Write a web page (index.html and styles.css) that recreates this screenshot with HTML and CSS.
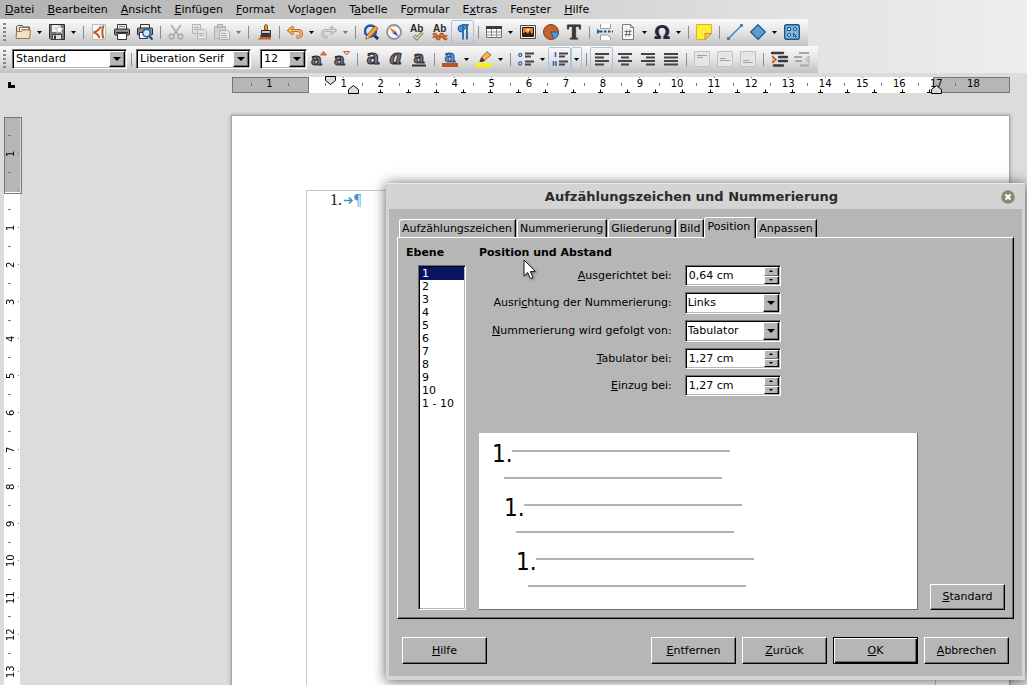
FILE: index.html
```html
<!DOCTYPE html>
<html lang="de">
<head>
    <meta charset="UTF-8">
    <meta name="viewport" content="width=device-width, initial-scale=1.0">
    <title>Aufzählungszeichen und Nummerierung</title>
    <link rel="stylesheet" href="styles.css">
</head>
<body>
    <header class="app-header">
        <nav class="menubar">
            <a href="#"><u>D</u>atei</a>
            <a href="#"><u>B</u>earbeiten</a>
            <a href="#"><u>A</u>nsicht</a>
            <a href="#"><u>E</u>infügen</a>
            <a href="#"><u>F</u>ormat</a>
            <a href="#">Vo<u>r</u>lagen</a>
            <a href="#">T<u>a</u>belle</a>
            <a href="#">F<u>o</u>rmular</a>
            <a href="#">E<u>x</u>tras</a>
            <a href="#">Fen<u>s</u>ter</a>
            <a href="#"><u>H</u>ilfe</a>
        </nav>

        <!-- Standard-Symbolleiste -->
        <div class="toolbar">
            <span class="grip"></span>
            <button class="tool" aria-label="Öffnen"><svg viewBox="0 0 16 16"><path d="M1.500 14.500V2.500l1-1h5l1 1.500h6v11.500z" fill="#e9dcb8" stroke="#6b5847"/><path d="M4.500 3.500h9v5h-9z" fill="#fff" stroke="#77706a"/><path d="M6 5.500h6" stroke="#999"/><path d="M1 14.500l.5-7h5l1-1.500h8L14.500 14.500z" fill="#efe3c3" stroke="#a3733e"/></svg></button>
            <button class="more" aria-label="Öffnen Menü"><svg viewBox="0 0 5 3"><path d="M0 0h5L2.500 3z"/></svg></button>
            <button class="tool" aria-label="Speichern"><svg viewBox="0 0 16 16"><path d="M.5.500h15v15H2L.5 14z" fill="#77757c" stroke="#2b2830"/><path d="M3 1h9v7H3z" fill="#eee"/><path d="M3.500 10.500h9v5h-9z" fill="#ddd" stroke="#444"/><path d="M5 11.500h2V15H5z" fill="#333"/><path d="M10.500 1l1.200 3 3.300.3-2.500 2 .8 3.200-2.800-1.700-2.800 1.700.8-3.200-2.500-2 3.300-.3z" fill="#fff" stroke="#999" stroke-width=".6"/></svg></button>
            <button class="more" aria-label="Speichern Menü"><svg viewBox="0 0 5 3"><path d="M0 0h5L2.500 3z"/></svg></button>
            <span class="sep"></span>
            <button class="tool" aria-label="Als PDF exportieren"><svg viewBox="0 0 16 16"><path d="M1.500.500h13v15h-13z" fill="#f7f7f7" stroke="#bbb"/><path d="M10 2.500C8 5.500 6 7.500 2.500 8.500c3 .5 5 2.500 6 5.500M12.500 1.500c-1.500 4-1.500 9 0 13" fill="none" stroke="#c25a1c" stroke-width="2"/></svg></button>
            <button class="tool" aria-label="Drucken"><svg viewBox="0 0 16 16"><path d="M3.500.500h9v5h-9z" fill="#eee" stroke="#35323a"/><path d="M5 2.500h6" stroke="#888"/><rect x=".5" y="5" width="15" height="6" rx="1" fill="#8d8b92" stroke="#2b2830"/><path d="M2 8.500h12" stroke="#2b2830"/><path d="M3.500 9.500h9v6h-9z" fill="#fff" stroke="#35323a"/></svg></button>
            <button class="tool" aria-label="Druckvorschau"><svg viewBox="0 0 16 16"><path d="M3.500.500h9v5h-9z" fill="#eee" stroke="#35323a"/><rect x=".5" y="4" width="15" height="7" rx="1" fill="#8d8b92" stroke="#2b2830"/><path d="M2.500 8.500h8v6h-8z" fill="#fff" stroke="#35323a"/><path d="M12 12l3.500 3.500" stroke="#173f74" stroke-width="2"/><circle cx="9.500" cy="9" r="3.700" fill="#cfe6f7" stroke="#215fa5" stroke-width="1.500"/></svg></button>
            <span class="sep"></span>
            <button class="tool" disabled aria-label="Ausschneiden"><svg viewBox="0 0 16 16" fill="none" stroke="#a8a8a8" stroke-width="1.500"><path d="M3 1l7 9.500M13 1L6 10.500"/><circle cx="3.500" cy="12.500" r="2.300"/><circle cx="12.500" cy="12.500" r="2.300"/></svg></button>
            <button class="tool" disabled aria-label="Kopieren"><svg viewBox="0 0 16 16" fill="#e2e2e2" stroke="#b4b4b4"><path d="M1.500.500h8v9h-8z"/><path d="M3 3.500h5M3 5.500h5"/><path d="M6.500 5.500h7l2 2v7.500h-9z"/><path d="M8 9.500h5M8 11.500h5"/></svg></button>
            <button class="tool" disabled aria-label="Einfügen"><svg viewBox="0 0 16 16" fill="#d2d2d2" stroke="#adadad"><path d="M.5 2.500h11v12H.5z"/><path d="M3.500.500h5v3h-5z"/><path d="M5.500 6.500h8l2 2v7h-10z" fill="#e8e8e8"/><path d="M7 9.500h5M7 11.500h6M7 13.500h6"/></svg></button>
            <button class="more off" disabled aria-label="Einfügen Menü"><svg viewBox="0 0 5 3"><path d="M0 0h5L2.500 3z"/></svg></button>
            <span class="sep"></span>
            <button class="tool" aria-label="Format übertragen"><svg viewBox="0 0 16 16"><path d="M8.500 6V1.500q1.500-2 3 0V6z" fill="#f0a23c" stroke="#8d4c12"/><path d="M5.500 6.500h9v3h-9z" fill="#c9c9c9" stroke="#2b2830"/><path d="M5 9.500h10v4H4z" fill="#3c3940"/><path d="M0 15.500c3 0 3-2 5-2.500h10v2.500z" fill="#c4622a"/></svg></button>
            <span class="sep"></span>
            <button class="tool" aria-label="Rückgängig"><svg viewBox="0 0 16 16"><path d="M6.500 2.500L2 6.500l4.500 4M2.500 6.500H11q3.500.5 3.500 3.200T11 13H9" fill="none" stroke="#b3591b" stroke-width="3"/><path d="M6.500 2.500L2 6.500l4.500 4M2.500 6.500H11q3.500.5 3.500 3.200T11 13H9" fill="none" stroke="#f8c05c" stroke-width="1.500"/></svg></button>
            <button class="more" aria-label="Rückgängig Menü"><svg viewBox="0 0 5 3"><path d="M0 0h5L2.500 3z"/></svg></button>
            <button class="tool" disabled aria-label="Wiederherstellen"><svg viewBox="0 0 16 16" fill="none"><path d="M9.500 2.500l4.500 4-4.500 4M13.500 6.500H5Q1.500 7 1.500 9.700T5 13h2" stroke="#b0b0b0" stroke-width="2.800"/><path d="M9.500 2.500l4.500 4-4.500 4M13.500 6.500H5Q1.500 7 1.500 9.700T5 13h2" stroke="#e2e2e2"/></svg></button>
            <button class="more off" disabled aria-label="Wiederherstellen Menü"><svg viewBox="0 0 5 3"><path d="M0 0h5L2.500 3z"/></svg></button>
            <span class="sep"></span>
            <button class="tool" aria-label="Suchen und Ersetzen"><svg viewBox="0 0 16 16"><path d="M11 11l4 4" stroke="#2a2a3a" stroke-width="3"/><circle cx="7.500" cy="7" r="5.500" fill="#dbe9f5" stroke="#1f5ba3" stroke-width="2.500"/><path d="M3 15l1-4 8-9 3 2.500-8.500 9z" fill="#f6a640" stroke="#a54e12"/><path d="M3 15l1-4 2.500 2.500z" fill="#fff" stroke="#6d4a30" stroke-width=".6"/></svg></button>
            <button class="tool" aria-label="Navigator"><svg viewBox="0 0 16 16"><circle cx="8" cy="8" r="7" fill="#f6f6f6" stroke="#929292" stroke-width="1.800"/><path d="M3.500 3.500L9.500 7 7 9.500z" fill="#e87b1f"/><path d="M12.500 12.500L9.500 7 7 9.500z" fill="#225e9e"/></svg></button>
            <button class="tool" aria-label="Rechtschreibung"><svg viewBox="0 0 16 16"><text x="1" y="8" class="t-ab">Ab</text><path d="M5 11.500l2.500 3 6-6" fill="none" stroke="#6e6b45" stroke-width="3"/><path d="M5 11.500l2.500 3 6-6" fill="none" stroke="#eae8bd" stroke-width="1.200"/></svg></button>
            <button class="tool" aria-label="Automatische Rechtschreibprüfung"><svg viewBox="0 0 16 16"><text x="1" y="8" class="t-ab">Ab</text><path d="M1 11q1.750-3 3.500 0t3.500 0 3.500 0 3.500 0M1 14q1.750-3 3.500 0t3.500 0 3.500 0 3.500 0" fill="none" stroke="#c05a1e" stroke-width="2"/></svg></button>
            <button class="tool active" aria-label="Formatierungszeichen"><svg viewBox="0 0 16 16"><path d="M13.500 1H7Q3 1 3 4.500T7 8z" fill="#4b93cf" stroke="#1d5c9e"/><path d="M7 1h6.500M8 1v14.500M12 1v14.500" stroke="#2c71b4" stroke-width="2"/></svg></button>
            <span class="sep"></span>
            <button class="tool" aria-label="Tabelle"><svg viewBox="0 0 16 16"><path d="M.5 2.500h15v11H.5z" fill="#fff" stroke="#6e6e6e"/><path d="M0 2h16v3H0z" fill="#3c3940"/><path d="M.5 8h15M.5 11h15M5.500 5v9M10.500 5v9" stroke="#8b8b8b"/></svg></button>
            <button class="more" aria-label="Tabelle Menü"><svg viewBox="0 0 5 3"><path d="M0 0h5L2.500 3z"/></svg></button>
            <button class="tool" aria-label="Bild"><svg viewBox="0 0 16 16"><path d="M.5 1.500h15v13H.5z" fill="#f2f2f2" stroke="#4c4950"/><path d="M2.500 3.500h11v9h-11z" fill="#e58a2b" stroke="#2d1b12"/><path d="M3 12v-3l3-1 2 2 2-4 1 4 2-1v3z" fill="#3a2014"/><circle cx="8" cy="6" r="1.500" fill="#fbe29a"/></svg></button>
            <button class="tool" aria-label="Diagramm"><svg viewBox="0 0 16 16"><circle cx="8" cy="8" r="7.500" fill="#c3632b" stroke="#8a3c12"/><path d="M8 8l7.500 0A7.500 7.500 0 0 1 11 14.800z" fill="#5b9bd0" stroke="#1f5b9c"/></svg></button>
            <button class="tool" aria-label="Textfeld"><svg viewBox="0 0 16 16"><text x="8" y="15" text-anchor="middle" class="t-serif">T</text></svg></button>
            <span class="sep"></span>
            <button class="tool" aria-label="Seitenumbruch"><svg viewBox="0 0 16 16"><path d="M3.500 0v4.500h10V0M3.500 16v-5h7l3 2.500V16" fill="#fff" stroke="#9a9a9a"/><path d="M0 5l4 2.500L0 10z" fill="#1d5c9e"/><path d="M3 7.500h13" stroke="#1d4d84" stroke-width="2" stroke-dasharray="2.500 1.500"/></svg></button>
            <button class="tool" aria-label="Feldbefehl"><svg viewBox="0 0 16 16"><path d="M2.500.500h8l3 3v12h-11z" fill="#f8f8f8" stroke="#7c7c7c"/><path d="M10.500.500v3h3" fill="none" stroke="#7c7c7c"/><path d="M7 5.500l-1 7M10 5.500l-1 7M4.500 7.500h7M4.500 10.500h7" stroke="#666" stroke-width=".9"/></svg></button>
            <button class="more" aria-label="Feldbefehl Menü"><svg viewBox="0 0 5 3"><path d="M0 0h5L2.500 3z"/></svg></button>
            <button class="tool" aria-label="Sonderzeichen"><svg viewBox="0 0 16 16"><text x="8" y="15" text-anchor="middle" class="t-omega">Ω</text></svg></button>
            <button class="more" aria-label="Sonderzeichen Menü"><svg viewBox="0 0 5 3"><path d="M0 0h5L2.500 3z"/></svg></button>
            <span class="sep"></span>
            <button class="tool" aria-label="Kommentar"><svg viewBox="0 0 16 16"><path d="M.5.500h15v9L9.500 15.500h-9z" fill="#fdf03a" stroke="#e8b400"/><path d="M9 15.500q0-3.500 0-6h6.500z" fill="#f7c777" stroke="#c98b2c"/></svg></button>
            <span class="sep"></span>
            <button class="tool" aria-label="Linie"><svg viewBox="0 0 16 16"><path d="M2 14L14 2" stroke="#3f84bf" stroke-width="1.500"/><path d="M0 13h3v3H0zM13 0h3v3h-3z" fill="#3f84bf"/></svg></button>
            <button class="tool" aria-label="Rautenformen"><svg viewBox="0 0 16 16"><path d="M8 .7L15.300 8 8 15.300.7 8z" fill="#5d9ccf" stroke="#1d5c9e" stroke-width="1.300"/></svg></button>
            <button class="more" aria-label="Formen Menü"><svg viewBox="0 0 5 3"><path d="M0 0h5L2.500 3z"/></svg></button>
            <button class="tool" aria-label="Zeichenfunktionen"><svg viewBox="0 0 16 16"><rect x=".7" y=".7" width="14.600" height="14.600" rx="1.500" fill="#7fb2da" stroke="#1d5591" stroke-width="1.400"/><g fill="#d8ecf8" stroke="#1d4d84"><path d="M3.500 3.500h3v3h-3zM9.500 12.500v-3l3 3z"/><circle cx="11" cy="5" r="1.500"/><circle cx="5" cy="11" r="1.500"/></g></svg></button>
        </div>

        <!-- Formatierung -->
        <div class="toolbar">
            <span class="grip"></span>
            <div class="combo combo-style"><select aria-label="Absatzvorlage"><option>Standard</option></select><span class="drop"></span></div>
            <span class="sep"></span>
            <div class="combo combo-font"><select aria-label="Schriftname"><option>Liberation Serif</option></select><span class="drop"></span></div>
            <div class="combo combo-size"><select aria-label="Schriftgröße"><option>12</option></select><span class="drop"></span></div>
            <button class="tool" aria-label="Schrift vergrößern"><svg viewBox="0 0 16 16"><text x="0" y="14" class="t-a">a</text><path d="M9.500 4l3-3.500 3 3.500z" fill="#e8843c" stroke="#b9521a" stroke-width=".8"/></svg></button>
            <button class="tool" aria-label="Schrift verkleinern"><svg viewBox="0 0 16 16"><text x="0" y="14" class="t-a">a</text><path d="M9.500.5l3 3.500 3-3.500z" fill="#fbd3a4" stroke="#c4622a"/></svg></button>
            <span class="sep"></span>
            <button class="tool" aria-label="Fett"><svg viewBox="0 0 16 16"><text x="8" y="13" text-anchor="middle" class="t-big">a</text></svg></button>
            <button class="tool" aria-label="Kursiv"><svg viewBox="0 0 16 16"><text x="8" y="13" text-anchor="middle" class="t-big t-italic">a</text></svg></button>
            <button class="tool" aria-label="Unterstrichen"><svg viewBox="0 0 16 16"><text x="8" y="12" text-anchor="middle" class="t-a">a</text><path d="M1 14.500h14" stroke="#3b2b3c" stroke-width="2"/></svg></button>
            <span class="sep"></span>
            <button class="tool" aria-label="Schriftfarbe"><svg viewBox="0 0 16 16"><text x="8" y="11" text-anchor="middle" class="t-a t-blue">a</text><path d="M0 12h16v4H0z" fill="#b9561e"/></svg></button>
            <button class="more" aria-label="Schriftfarbe Menü"><svg viewBox="0 0 5 3"><path d="M0 0h5L2.500 3z"/></svg></button>
            <button class="tool" aria-label="Zeichenhintergrund"><svg viewBox="0 0 16 16"><path d="M5 7l6-6.500L15 4l-6.500 5.500z" fill="#f2b552" stroke="#9a5216" stroke-width=".8"/><path d="M4 9l1.500-3L9 9.500 6.500 11H3.500z" fill="#4b3b3a"/><path d="M0 12h16v4H0z" fill="#fcee10"/></svg></button>
            <button class="more" aria-label="Zeichenhintergrund Menü"><svg viewBox="0 0 5 3"><path d="M0 0h5L2.500 3z"/></svg></button>
            <span class="sep"></span>
            <button class="tool" aria-label="Aufzählung"><svg viewBox="0 0 16 16"><g fill="#fff" stroke="#2b6db0" stroke-width="1.300"><circle cx="2.200" cy="4" r="1.500"/><circle cx="2.200" cy="12.500" r="1.500"/></g><path d="M7 2.500h9M7 5.500h6M7 10.500h9M7 13.500h6" stroke="#45424a" stroke-width="2"/></svg></button>
            <button class="more" aria-label="Aufzählung Menü"><svg viewBox="0 0 5 3"><path d="M0 0h5L2.500 3z"/></svg></button>
            <button class="tool active" aria-label="Nummerierung"><svg viewBox="0 0 16 16"><path d="M3.500 1v5M1.500 10v5M4 10v5" stroke="#2b6db0" stroke-width="1.600"/><path d="M7 2.500h9M7 5.500h6M7 10.500h9M7 13.500h6" stroke="#45424a" stroke-width="2"/></svg></button>
            <button class="more active" aria-label="Nummerierung Menü"><svg viewBox="0 0 5 3"><path d="M0 0h5L2.500 3z"/></svg></button>
            <span class="sep"></span>
            <button class="tool active" aria-label="Linksbündig"><svg viewBox="0 0 16 16" class="lines"><path d="M1 3h14M1 6.500h9M1 10h14M1 13.500h9"/></svg></button>
            <button class="tool" aria-label="Zentriert"><svg viewBox="0 0 16 16" class="lines"><path d="M1 3h14M4 6.500h8M1 10h14M4 13.500h8"/></svg></button>
            <button class="tool" aria-label="Rechtsbündig"><svg viewBox="0 0 16 16" class="lines"><path d="M1 3h14M6 6.500h9M1 10h14M6 13.500h9"/></svg></button>
            <button class="tool" aria-label="Blocksatz"><svg viewBox="0 0 16 16" class="lines"><path d="M1 3h14M1 6.500h14M1 10h14M1 13.500h14"/></svg></button>
            <span class="sep"></span>
            <button class="tool" disabled aria-label="Oben ausrichten"><svg viewBox="0 0 16 16" fill="#e6e6e6" stroke="#c2c2c2"><path d="M.5.500h15v15H.5z"/><path d="M3 4.500h10M3 6.500h6" stroke="#a2a2a2"/></svg></button>
            <button class="tool" disabled aria-label="Mittig ausrichten"><svg viewBox="0 0 16 16" fill="#e6e6e6" stroke="#c2c2c2"><path d="M.5.500h15v15H.5z"/><path d="M3 7.500h6M3 9.500h10" stroke="#a2a2a2"/></svg></button>
            <button class="tool" disabled aria-label="Unten ausrichten"><svg viewBox="0 0 16 16" fill="#e6e6e6" stroke="#c2c2c2"><path d="M.5.500h15v15H.5z"/><path d="M3 9.500h6M3 11.500h10" stroke="#a2a2a2"/></svg></button>
            <span class="sep"></span>
            <button class="tool" aria-label="Einzug erhöhen"><svg viewBox="0 0 16 16"><path d="M1 2h11M8 6h8M8 10h8M3 14.500h9" stroke="#3c3940" stroke-width="2.400" stroke-linecap="round"/><path d="M1 5l4 3.500L1 12" fill="#f1b26c" stroke="#c0591b" stroke-width="1.500"/></svg></button>
            <button class="tool" disabled aria-label="Einzug verringern"><svg viewBox="0 0 16 16"><path d="M5 2h10M0 6h8M1 10h7M6 14.500h9" stroke="#a6a6a6" stroke-width="2.200"/><path d="M15 5l-4 3.500L15 12z" fill="#d0d0d0" stroke="#b0b0b0"/></svg></button>
        </div>
    </header>

    <main class="workspace">
        <div class="ruler-row">
            <span class="tab-type"></span>
            <div class="hruler">
                <div class="hruler-cells">
                    <span>1</span><span></span><span>1</span><span>2</span><span>3</span><span>4</span><span>5</span><span>6</span><span>7</span><span>8</span><span>9</span><span>10</span><span>11</span><span>12</span><span>13</span><span>14</span><span>15</span><span>16</span><span>17</span><span>18</span>
                </div>
                <!-- Einzugsmarken und Standardtabulatoren -->
                <svg class="hruler-marks" width="778" height="18">
                    <path d="M93.500-.5h10v4l-5 4-5-4z" fill="#dcdcda" stroke="#000"/>
                    <path d="M116.500 16.500v-4l5-4 5 4v4zM699.500 16.500v-4l5-4 5 4v4z" fill="#dcdcda" stroke="#000"/>
                    <path fill="none" stroke="#000" d="M146 15.500h5m-2.500-3v3M174 15.500h5m-2.500-3v3M202 15.500h5m-2.500-3v3M229 15.500h5m-2.500-3v3M256 15.500h5m-2.500-3v3M284 15.500h5m-2.500-3v3M311 15.500h5m-2.500-3v3M339 15.500h5m-2.500-3v3M366 15.500h5m-2.500-3v3M393 15.500h5m-2.500-3v3M421 15.500h5m-2.500-3v3M448 15.500h5m-2.500-3v3M476 15.500h5m-2.500-3v3M503 15.500h5m-2.500-3v3M531 15.500h5m-2.500-3v3M558 15.500h5m-2.500-3v3M586 15.500h5m-2.500-3v3M613 15.500h5m-2.500-3v3M640 15.500h5m-2.500-3v3M668 15.500h5m-2.500-3v3M695 15.500h5m-2.500-3v3"/>
                </svg>
            </div>
        </div>
        <div class="edit-area">
            <div class="vruler">
                <span>1</span><span></span><span>1</span><span>2</span><span>3</span><span>4</span><span>5</span><span>6</span><span>7</span><span>8</span><span>9</span><span>10</span><span>11</span><span>12</span><span>13</span>
            </div>
            <div class="sheet">
                <div class="text-frame">
                    <p class="doc-line">1.<svg class="tab-mark" width="12" height="9" viewBox="0 0 12 9"><path d="M2 4.500h8M7 1.500l3 3-3 3" fill="none" stroke="#3d8fc4" stroke-width="1.500"/></svg><span class="para-mark">¶</span></p>
                </div>
            </div>
        </div>
    </main>

    <section class="dialog" role="dialog" aria-labelledby="dlg-title">
        <div class="titlebar">
            <h1 id="dlg-title">Aufzählungszeichen und Nummerierung</h1>
            <button class="close" aria-label="Schließen"><svg width="14" height="14" viewBox="0 0 14 14"><circle cx="7" cy="7" r="6.800" fill="#8d8970"/><path d="M4.500 4.500l5 5M9.500 4.500l-5 5" stroke="#fff" stroke-width="2"/></svg></button>
        </div>
        <div class="dialog-body">
            <div class="tabs" role="tablist">
                <button class="tab" role="tab">Aufzählungszeichen</button>
                <button class="tab" role="tab">Nummerierung</button>
                <button class="tab" role="tab">Gliederung</button>
                <button class="tab" role="tab">Bild</button>
                <button class="tab current" role="tab" aria-selected="true">Position</button>
                <button class="tab" role="tab">Anpassen</button>
            </div>
            <div class="panel" role="tabpanel">
                <div class="levels">
                    <label class="heading" for="level">Ebene</label>
                    <select id="level" class="level-list" size="26">
                        <option selected>1</option>
                        <option>2</option>
                        <option>3</option>
                        <option>4</option>
                        <option>5</option>
                        <option>6</option>
                        <option>7</option>
                        <option>8</option>
                        <option>9</option>
                        <option>10</option>
                        <option>1 - 10</option>
                    </select>
                </div>
                <div class="settings">
                    <h2 class="heading">Position und Abstand</h2>
                    <div class="form">
                        <label for="align-at"><u>A</u>usgerichtet bei:</label>
                        <div class="spin"><input type="text" id="align-at" value="0,64 cm"><div class="steps"><button class="up" aria-label="Mehr"></button><button class="down" aria-label="Weniger"></button></div></div>
                        <label for="num-align">Ausri<u>c</u>htung der Nummerierung:</label>
                        <div class="combo"><select id="num-align"><option>Links</option></select><span class="drop"></span></div>
                        <label for="followed"><u>N</u>ummerierung wird gefolgt von:</label>
                        <div class="combo"><select id="followed"><option>Tabulator</option></select><span class="drop"></span></div>
                        <label for="tab-at"><u>T</u>abulator bei:</label>
                        <div class="spin"><input type="text" id="tab-at" value="1,27 cm"><div class="steps"><button class="up" aria-label="Mehr"></button><button class="down" aria-label="Weniger"></button></div></div>
                        <label for="indent-at"><u>E</u>inzug bei:</label>
                        <div class="spin"><input type="text" id="indent-at" value="1,27 cm"><div class="steps"><button class="up" aria-label="Mehr"></button><button class="down" aria-label="Weniger"></button></div></div>
                    </div>
                    <div class="preview-row">
                        <div class="preview">
                            <div class="sample"><div class="first"><span>1.</span><i class="rule"></i></div><i class="rule"></i>
                                <div class="sample"><div class="first"><span>1.</span><i class="rule"></i></div><i class="rule"></i>
                                    <div class="sample"><div class="first"><span>1.</span><i class="rule"></i></div><i class="rule"></i></div>
                                </div>
                            </div>
                        </div>
                        <button class="btn btn-small"><u>S</u>tandard</button>
                    </div>
                </div>
            </div>
            <div class="actions">
                <button class="btn btn-help"><u>H</u>ilfe</button>
                <button class="btn"><u>E</u>ntfernen</button>
                <button class="btn"><u>Z</u>urück</button>
                <button class="btn btn-default"><u>O</u>K</button>
                <button class="btn"><u>A</u>bbrechen</button>
            </div>
        </div>
    </section>

    <svg class="pointer" width="13" height="21" viewBox="0 0 13 21"><path d="M1 1v16l3.700-3.500L7.300 19.500l2.600-1.100L7.400 12.500h5z" fill="#fff" stroke="#222"/></svg>
</body>
</html>
```

FILE: styles.css
```css
:root {
    --face: #b6b6b6;
    --shade: #6e6e6e;
    --desk: #dcdcda;
    --select: #0a1464;
}
* { box-sizing: border-box; }
body { margin: 0; height: 100vh; overflow: hidden; display: flex; flex-direction: column; background: var(--desk); color: #000; font-family: "DejaVu Sans", sans-serif; font-size: 11px; line-height: 14px; }
button, input, select { font: inherit; color: inherit; margin: 0; padding: 0; border: 0; border-radius: 0; background: none; }
svg { display: block; overflow: visible; }

/* Menü */
.app-header { background: linear-gradient(90deg, #b3b3b3, #bcbcbc 20%, #d6d6d6 60%, #e4e4e4 80%, #eee); }
.menubar { display: flex; gap: 13px; height: 19px; padding: 3px 5px 0; }
.menubar a { color: #000; text-decoration: none; }

/* Symbolleisten */
.toolbar { display: flex; align-items: center; width: max-content; height: 27px; padding: 0 5px 1px 0; background: linear-gradient(#fafafa, #e6e6e6 45%, #c2c2c2); }
.grip { width: 3px; height: 18px; margin: 0 5px 0 3px; background: repeating-linear-gradient(#888 0 2px, transparent 2px 4px); }
.tool { width: 23px; height: 24px; border: 1px solid transparent; display: flex; align-items: center; justify-content: center; }
.tool svg { width: 16px; height: 16px; flex: none; }
.more { width: 11px; height: 24px; border: 1px solid transparent; display: flex; align-items: center; justify-content: center; }
.more svg { width: 5px; height: 3px; flex: none; }
.more.off svg { fill: #777; }
.tool.active, .more.active { border-color: #a9c3dc; border-radius: 2px; }
.sep { width: 8px; height: 13px; background: linear-gradient(#8c8c8c, #8c8c8c) center / 1px 100% no-repeat; }
.lines { stroke: #45424a; stroke-width: 2; }
.t-ab { font: bold 10px/10px "Liberation Sans", sans-serif; fill: #2d2630; }
.t-serif { font: bold 20px/20px "Liberation Serif", serif; fill: #38353c; stroke: #38353c; }
.t-omega { font: bold 19px/19px "DejaVu Sans", sans-serif; fill: #2d2634; }
.t-a { font: bold 17px/17px "DejaVu Serif", serif; fill: #77747c; stroke: #2f2b33; stroke-width: 1; }
.t-big { font: bold 20px/20px "DejaVu Serif", serif; fill: #77747c; stroke: #2f2b33; stroke-width: 1; }
.t-italic { font-style: italic; }
.t-blue { fill: #5b9bd0; stroke: #1d5591; }

/* Felder */
.combo, .spin { position: relative; border: 1px solid; border-color: var(--shade) #fff #fff var(--shade); background: #fff; box-shadow: inset 1px 1px #000, inset -1px -1px var(--face); }
.combo { height: 22px; }
.combo select { appearance: none; width: 100%; height: 100%; padding: 0 18px 0 2px; }
.drop { position: absolute; top: 1px; right: 1px; bottom: 1px; width: 16px; pointer-events: none; background: var(--face); border: 1px solid; border-color: #fff #000 #000 #fff; box-shadow: inset -1px -1px var(--shade); display: flex; align-items: center; justify-content: center; }
.drop::before { content: ""; border: 4px solid transparent; border-top-color: #000; border-bottom: 0; }
.toolbar .combo { height: 20px; }
.toolbar .combo select { padding-left: 3px; }
.toolbar .combo-style, .toolbar .combo-font { width: 115px; margin-left: 1px; }
.toolbar .combo-size { width: 47px; margin-left: 9px; }
.spin { display: flex; height: 21px; padding: 1px; }
.spin input { flex: 1; min-width: 0; padding-left: 2px; outline: 0; }
.steps { width: 15px; display: flex; flex-direction: column; }
.steps button { flex: 1; display: flex; align-items: center; justify-content: center; background: var(--face); border: 1px solid; border-color: #fff #000 var(--shade) #fff; box-shadow: inset -1px 0 var(--shade); }
.steps .down { border-bottom-color: #000; }
.steps button::before { content: ""; border: 2px solid transparent; }
.steps .up::before { border-top: 0; border-bottom-color: #000; }
.steps .down::before { border-bottom: 0; border-top-color: #000; }

/* Lineale */
.workspace { flex: 1; min-height: 0; display: flex; flex-direction: column; }
.ruler-row { display: flex; padding: 4px 17px 0 8px; }
.tab-type { width: 7px; height: 6px; margin: 5px 217px 0 0; border: solid #000; border-width: 0 0 3px 3px; }
.hruler { position: relative; flex: 1; height: 16px; font-size: 10px; background: #fff; }
.hruler::before, .hruler::after { content: ""; position: absolute; top: 0; bottom: 0; left: 0; width: 75px; background: var(--face); border: 1px solid #777; }
.hruler::after { left: auto; right: 0; }
.hruler-cells { position: relative; z-index: 1; display: flex; width: 760px; padding-left: 19px; }
.hruler-cells span { flex: 1; height: 16px; text-align: center; background: linear-gradient(#777, #777) 0 6px / 1px 3px no-repeat, linear-gradient(#777, #777) 18px 0 / 1px 1px no-repeat; }
.hruler-marks { position: absolute; z-index: 2; top: 0; left: 0; }
.edit-area { flex: 1; min-height: 0; display: flex; padding: 22px 17px 0 4px; overflow: hidden; }
.vruler { width: 16px; margin-top: 2px; padding-top: 18px; font-size: 10px; background: linear-gradient(var(--face), var(--face)) 0 0 / 100% 75px no-repeat #fff; }
.vruler::before { content: ""; position: absolute; width: 16px; height: 75px; margin-top: -18px; border: 1px solid #777; }
.vruler span { display: block; width: 16px; height: 37px; line-height: 14px; text-align: center; writing-mode: vertical-rl; transform: rotate(180deg); background: linear-gradient(#777, #777) 9px 100% / 3px 1px no-repeat, linear-gradient(#777, #777) 1px 18px / 1px 1px no-repeat; }

/* Dokument */
.sheet { flex: 1; min-height: 600px; margin-left: 211px; padding: 74px 73px 0 74px; background: #fff; border: 1px solid #a8a8a8; border-bottom: 0; box-shadow: 0 0 4px rgba(0,0,0,0.3); }
.text-frame { height: 100%; border: 1px solid #c6c6c6; border-bottom: 0; }
.doc-line { display: flex; align-items: center; margin: 0; padding-left: 23px; font: 16px/18px "Liberation Serif", serif; color: #111; }
.para-mark { color: #3f97d6; }

/* Dialog */
.dialog { position: absolute; z-index: 5; top: 183px; left: 386px; right: 2px; padding: 0 3px 4px; background: #d4d4d4; border-top: 1px solid #e9e9e9; box-shadow: 0 1px 12px rgba(0,0,0,0.65); }
.titlebar { display: flex; align-items: center; height: 25px; padding-right: 7px; }
.titlebar h1 { flex: 1; margin: 0 7px 0 0; text-align: center; font-size: 13px; line-height: 16px; font-weight: bold; color: #2b2b2b; }
.dialog-body { padding: 8px 8px 12px; background: var(--face); }
.tabs { display: flex; align-items: flex-end; height: 20px; padding-left: 2px; }
.tab { height: 18px; padding: 0 3px 0 2px; margin-right: 1px; border: 1px solid; border-color: #fff #000 transparent #fff; border-top-left-radius: 3px; border-bottom: 0; box-shadow: inset -1px 0 var(--shade); white-space: nowrap; }
.tab.current { position: relative; height: 21px; margin: 0 0 -1px -1px; padding: 0 5px 2px 2px; background: var(--face); }
.panel { display: flex; gap: 13px; padding: 8px 8px 8px 8px; border: 1px solid; border-color: #fff #000 #000 #fff; box-shadow: inset -1px -1px var(--shade); }
.heading { display: block; margin: 0 0 5px; font-size: 11px; font-weight: bold; line-height: 14px; }
.levels { width: 60px; }
.level-list { display: block; width: 48px; height: 345px; margin-left: 12px; padding: 1px; overflow: hidden; outline: 0; background: #fff; border: 1px solid; border-color: var(--shade) #fff #fff var(--shade); box-shadow: inset 1px 1px #000, inset -1px -1px var(--face); }
.level-list option { height: 13px; min-height: 13px; padding: 0 2px; line-height: 13px; }
.level-list option:checked { background: linear-gradient(var(--select), var(--select)); -webkit-text-fill-color: #fff; }
.settings { flex: 1; display: flex; flex-direction: column; }
.form { display: grid; grid-template-columns: max-content 96px; align-items: center; gap: 6px 13px; padding-left: 13px; }
.form label { text-align: right; }
.preview-row { display: flex; align-items: flex-end; gap: 12px; margin-top: auto; }
.preview { flex: 1; height: 177px; padding: 7px 0 0; overflow: hidden; background: #fff; border: solid var(--shade); border-width: 0 1px 1px 0; }
.sample { padding-left: 12px; }
.first { display: flex; height: 28px; font: 24px/28px "DejaVu Sans Condensed", "DejaVu Sans", sans-serif; }
.first span { width: 21px; flex: none; padding-left: 1px; }
.rule { display: block; width: 218px; height: 2px; margin: 9px 0 15px 13px; background: #b2b2b2; }
.first .rule { margin: 10px 0 0; }

.btn { width: 85px; height: 27px; background: var(--face); border: 1px solid; border-color: #fff #000 #000 #fff; box-shadow: inset -1px -1px var(--shade); }
.btn-small { width: 75px; height: 26px; }
.btn-default { border-color: #000; box-shadow: inset 1px 1px #fff, inset -1px -1px #000, inset -2px -2px var(--shade); }
.actions { display: flex; gap: 6px; padding: 18px 5px 0; }
.btn-help { margin-right: auto; }

.pointer { position: absolute; z-index: 9; top: 259px; left: 523px; filter: drop-shadow(1px 1px 1px rgba(0,0,0,0.4)); }
```
